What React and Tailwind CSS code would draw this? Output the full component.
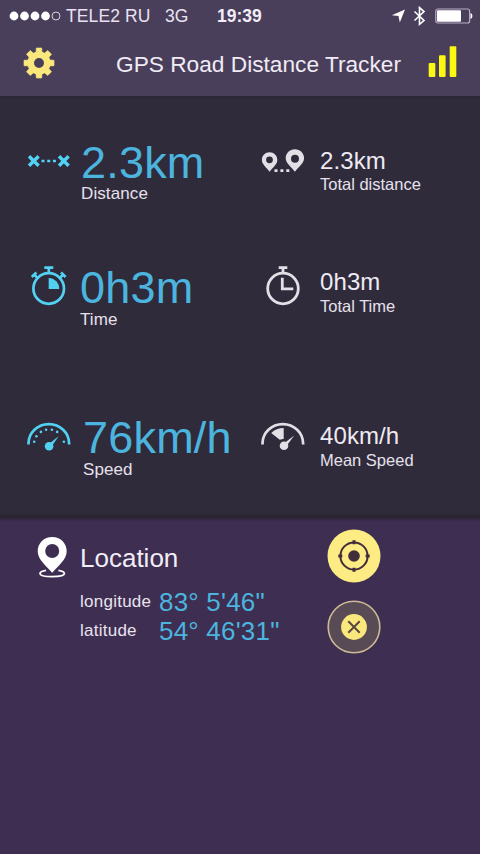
import clsx from 'clsx';

const iconClass = 'block h-11 w-11 shrink-0';

function RouteIcon() {
  return (
    <svg viewBox="0 0 44 44" className={iconClass} fill="none" stroke="currentColor" strokeWidth="3.4">
      <path d="M2 17.2l9.6 9.6M11.6 17.2L2 26.8M32 17.2l9.6 9.6M41.6 17.2L32 26.8" />
      <path d="M14.5 22h3M20.2 22h3M25.900 22h3" strokeWidth="2.6" />
    </svg>
  );
}

function PinsIcon() {
  return (
    <svg viewBox="0 0 44 44" className={iconClass} fill="currentColor" fillRule="evenodd">
      <path d="M8.6 13.3c4.3 0 7.7 3.3 7.7 7.6 0 4.5-4.7 7.6-7.7 11.8C5.7 28.5.9 25.4.9 20.9c0-4.3 3.4-7.6 7.7-7.6zM8.5 17.4a3.4 3.4 0 100 6.800 3.4 3.4 0 000-6.8z" />
      <path d="M33.9 10.3c5.1 0 9.2 3.9 9.2 9 0 5.2-5.7 8.6-9.2 13.5-3.5-4.9-9.2-8.3-9.2-13.5 0-5.1 4.1-9 9.2-9zM34 15.7a4 4 0 100 8 4 4 0 000-8z" />
      <path d="M13.5 30.2h3V33h-3zM19.4 30.2h3V33h-3zM25.3 30.2h3V33h-3z" />
    </svg>
  );
}

function StopwatchIcon() {
  return (
    <svg viewBox="0 0 44 44" className={iconClass} fill="none" stroke="currentColor" strokeWidth="2.7">
      <circle cx="21.7" cy="25.5" r="15.3" />
      <path d="M17.3 4.600h9M21.8 5v5M4.800 14l4.600-4.5M7.2 11.6l3.2 3.2M38.600 14L34 9.5M36.2 11.6L33 14.8" />
      <path d="M21.7 26V15a10.7 10.7 0 0110.5 11z" fill="currentColor" stroke="none" />
    </svg>
  );
}

function ClockIcon() {
  return (
    <svg viewBox="0 0 44 44" className={iconClass} fill="none" stroke="currentColor" strokeWidth="2.8">
      <circle cx="22" cy="25.5" r="15.3" />
      <path d="M17.7 4.7h8.6M22 5v5M21.3 14.7v11.2h11" />
    </svg>
  );
}

function SpeedIcon() {
  return (
    <svg viewBox="0 0 44 44" className={iconClass} fill="currentColor">
      <path d="M1.5 29.6v-1a20.3 19.5 0 0140.6 0v1" fill="none" stroke="currentColor" strokeWidth="2.7" />
      <circle cx="7.2" cy="26.8" r="1.3" />
      <circle cx="9.4" cy="21.3" r="1.3" />
      <circle cx="13.9" cy="16.9" r="1.3" />
      <circle cx="19.1" cy="14.7" r="1.3" />
      <circle cx="24.9" cy="14.7" r="1.3" />
      <circle cx="30.2" cy="16.9" r="1.3" />
      <circle cx="36.9" cy="26.8" r="1.3" />
      <circle cx="22.1" cy="31.3" r="4.3" />
      <path d="M20.9 29.700L31.600 21.200 24 32.4z" />
    </svg>
  );
}

function MeanSpeedIcon() {
  return (
    <svg viewBox="0 0 44 44" className={iconClass} fill="currentColor">
      <path d="M1.5 29.6v-1a20.3 19.5 0 0140.6 0v1" fill="none" stroke="currentColor" strokeWidth="2.7" />
      <path d="M10.2 17.9c3.3-3.2 7.7-4.9 12.5-4.9v10.9c-1.4 0-2.4.1-3.9.8z" />
      <circle cx="23" cy="30.7" r="4.3" />
      <path d="M21.5 29.4L33.2 20.6 24.8 32z" />
    </svg>
  );
}

function LocationPin() {
  return (
    <svg viewBox="0 0 30 42" className="block h-[42px] w-[30px] shrink-0" fill="white">
      <path d="M9 34.300c-4 .6-6 1.9-6 3.2 0 2 4.8 3.2 12.2 3.2s12.2-1.2 12.2-3.2c0-1.3-2-2.6-6-3.2" fill="none" stroke="white" strokeWidth="1.8" />
      <path fillRule="evenodd" d="M15.2 1c8.2 0 14.5 6.1 14.5 14.2C29.7 23.5 21 29.800 15.2 36.800 9.4 29.800.7 23.5.7 15.2.7 7.100 7 1 15.2 1zM15.2 8a7 7 0 100 14 7 7 0 000-14z" />
    </svg>
  );
}

function Gear() {
  const teeth = [0, 45, 90, 135, 180, 225, 270, 315];
  return (
    <svg viewBox="0 0 32 32" className="block h-8 w-8 text-[#fbe87c]" fill="currentColor">
      {teeth.map((a) => (
        <path key={a} d="M13 6l.3-5h5.4l.3 5z" stroke="currentColor" strokeWidth=".6" strokeLinejoin="round" transform={`rotate(${a} 16 16)`} />
      ))}
      <circle cx="16" cy="16" r="8.3" fill="none" stroke="currentColor" strokeWidth="6.6" />
    </svg>
  );
}

function StatusBar() {
  return (
    <div className="flex h-8 items-center pl-[9px] text-[17.5px] leading-8 text-[#e9e2f2]">
      <svg viewBox="0 0 52 10" className="block h-[10px] w-[52px]" fill="white">
        <circle cx="5" cy="5" r="4.4" />
        <circle cx="15.5" cy="5" r="4.4" />
        <circle cx="26" cy="5" r="4.4" />
        <circle cx="36.5" cy="5" r="4.4" />
        <circle cx="47" cy="5" r="4" fill="none" stroke="#d9d0e2" />
      </svg>
      <span className="ml-[5px] w-[99px] tracking-[0.1px]">TELE2 RU</span>
      <span className="w-[52px]">3G</span>
      <span className="w-[174px] font-bold text-[#f2edf8]">19:39</span>
      <svg viewBox="0 0 14 14" className="block h-[14px] w-[14px]" fill="white">
        <path d="M14 .5L8.800 13.500 7.5 7 .8 6.200z" />
      </svg>
      <svg viewBox="0 0 14 20" className="ml-2 block h-5 w-[14px]" fill="none" stroke="white" strokeWidth="1.6">
        <path d="M1.500 5.500l9.500 9-4.500 3.800V1.600l4.500 4-9.500 8.900" />
      </svg>
      <svg viewBox="0 0 38 16" className="ml-2 block h-4 w-[38px]">
        <rect x=".8" y="1" width="33.8" height="14" rx="2" fill="none" stroke="#b8aec4" strokeWidth="1.2" />
        <rect x="2" y="2.200" width="24" height="11.600" rx="1" fill="white" />
        <path d="M35.500 5c2.500.5 2.500 5.500 0 6z" fill="white" />
      </svg>
    </div>
  );
}

function Metric({ icon: Icon, value, label, big, iconClassName, textClassName, labelClassName }) {
  return (
    <div className={clsx('flex', big ? 'w-[234px] pl-[27px] text-[#52d2f3]' : 'pl-[27px] text-[#e3dfe7]')}>
      <div className={iconClassName}>
        <Icon />
      </div>
      <div className={clsx('whitespace-nowrap', textClassName)}>
        <div className={big ? 'text-[45px] leading-10 tracking-[0.2px] text-[#4bb5df]' : 'text-[24px] leading-6 tracking-[0.1px] text-[#eeeaf3]'}>{value}</div>
        <div className={clsx('leading-5 text-[#e6e1ec]', big ? 'text-[17px] tracking-[0.1px]' : 'text-[16.5px]', labelClassName)}>{label}</div>
      </div>
    </div>
  );
}

export default function App() {
  return (
    <div className="h-[854px] w-[480px] overflow-hidden bg-[#3e2e51] font-['Liberation_Sans',Arial,sans-serif]">
      <header className="h-24 bg-[#4a3f5b]">
        <StatusBar />
        <div className="flex h-16 pl-[23px]">
          <div className="mt-[15px]">
            <Gear />
          </div>
          <h1 className="ml-[61px] w-[312px] whitespace-nowrap text-[22.7px] leading-[65px] text-[#f0ebf5]">GPS Road Distance Tracker</h1>
          <svg viewBox="0 0 30 32" className="mt-[14px] block h-8 w-[30px]" fill="#fbf813">
            <rect x=".7" y="17" width="6.6" height="14" rx="1" />
            <rect x="11" y="9.3" width="6.6" height="21.7" rx="1" />
            <rect x="21.7" y=".3" width="6.6" height="30.7" rx="1" />
          </svg>
        </div>
      </header>

      <main className="h-[422px] bg-[#302b3b] bg-[linear-gradient(to_bottom,#2b2535,#302b3b_4px,#302b3b_416px,#29232f)]">
        <div className="flex h-[124px]">
          <Metric big icon={RouteIcon} value="2.3km" label="Distance" iconClassName="pt-[43px]" textClassName="ml-2.5 pt-[47px]" labelClassName="mt-px" />
          <Metric icon={PinsIcon} value="2.3km" label="Total distance" iconClassName="pt-[43px]" textClassName="ml-[15px] pt-[53px]" labelClassName="mt-px" />
        </div>
        <div className="flex h-[150px]">
          <Metric big icon={StopwatchIcon} value="0h3m" label="Time" iconClassName="pt-[43px]" textClassName="ml-[9px] pt-12" labelClassName="mt-0.5" />
          <Metric icon={ClockIcon} value="0h3m" label="Total Time" iconClassName="pt-[43px]" textClassName="ml-[15px] pt-[50px]" labelClassName="mt-0.5" />
        </div>
        <div className="flex h-[148px]">
          <Metric big icon={SpeedIcon} value="76km/h" label="Speed" iconClassName="pt-[45px]" textClassName="ml-3 pt-12" labelClassName="mt-0.5" />
          <Metric icon={MeanSpeedIcon} value="40km/h" label="Mean Speed" iconClassName="pt-[45px]" textClassName="ml-[15px] pt-[54px]" labelClassName="mt-0.5" />
        </div>
      </main>

      <section className="flex bg-[linear-gradient(to_bottom,#33263f,#3e2e51_4px)] pl-[37px]">
        <div className="pt-[18px]">
          <LocationPin />
        </div>
        <div className="ml-[13px] w-[247px] pt-6 whitespace-nowrap">
          <h2 className="text-[26px] leading-8 text-[#f1ecf6]">Location</h2>
          <div className="mt-[14px] flex h-7 items-start text-[17px] tracking-[0.25px] text-[#e9e3ef]">
            <span className="w-[79px] leading-7">longitude</span>
            <span className="text-[26px] leading-7 tracking-[0.2px] text-[#4bb5df]">83° 5'46"</span>
          </div>
          <div className="mt-px flex h-7 items-start text-[17px] tracking-[0.25px] text-[#e9e3ef]">
            <span className="w-[79px] leading-7">latitude</span>
            <span className="text-[26px] leading-7 tracking-[0.2px] text-[#4bb5df]">54° 46'31"</span>
          </div>
        </div>
        <div className="flex flex-col gap-[17px] pt-[11px]">
          <svg viewBox="0 0 54 54" className="block h-[54px] w-[54px]">
            <circle cx="27" cy="27" r="26.5" fill="#fdeb83" />
            <circle cx="27" cy="27" r="13.6" fill="none" stroke="#412d3b" strokeWidth="2" />
            <circle cx="27" cy="27" r="5.8" fill="#412d3b" />
            <path d="M27 11.3v4M27 38.7v4M11.3 27h4M38.7 27h4" stroke="#412d3b" strokeWidth="3" />
          </svg>
          <svg viewBox="0 0 54 54" className="block h-[54px] w-[54px]">
            <circle cx="27" cy="27" r="25.8" fill="#594b56" stroke="#cdbb95" strokeWidth="1.6" />
            <circle cx="27" cy="27" r="12.9" fill="#fbe87c" />
            <path d="M21.3 21.3l11.4 11.4M32.7 21.3L21.3 32.7" stroke="#594640" strokeWidth="2" />
          </svg>
        </div>
      </section>
    </div>
  );
}
